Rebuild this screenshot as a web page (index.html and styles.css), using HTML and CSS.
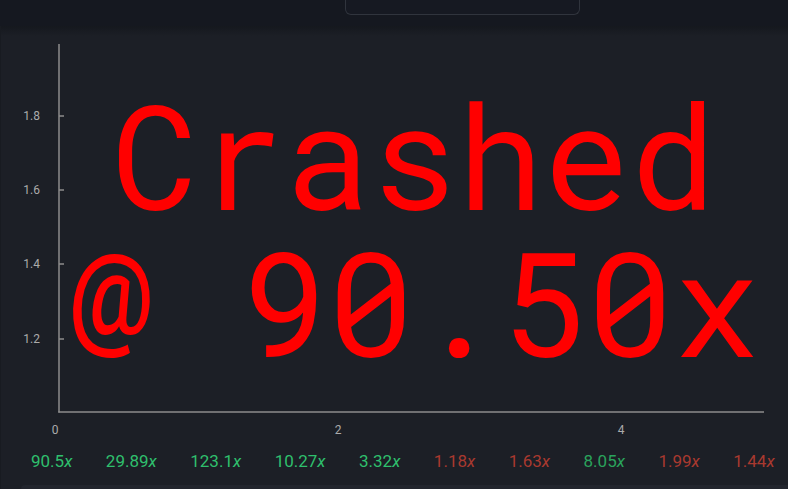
FILE: index.html
```html
<!DOCTYPE html>
<html>
<head>
<meta charset="utf-8">
<link rel="stylesheet" href="styles.css">
</head>
<body>
<div class="topbar">
  <div class="tab"></div>
</div>
<div class="panel">
  <div class="chart">
    <svg class="plot" width="788" height="410" viewBox="0 0 788 410">
      <g class="axis">
        <line x1="58" y1="14" x2="58" y2="382.5"/>
        <line x1="57.25" y1="382" x2="763" y2="382"/>
        <line x1="58" y1="86" x2="63" y2="86"/>
        <line x1="58" y1="160" x2="63" y2="160"/>
        <line x1="58" y1="234" x2="63" y2="234"/>
        <line x1="58" y1="309" x2="63" y2="309"/>
      </g>
      <g class="ylab">
        <text x="39" y="90">1.8</text>
        <text x="39" y="164">1.6</text>
        <text x="39" y="238">1.4</text>
        <text x="39" y="313">1.2</text>
      </g>
      <g class="xlab">
        <text x="54" y="404">0</text>
        <text x="337" y="404">2</text>
        <text x="620" y="404">4</text>
      </g>
    </svg>
    <div class="crash">Crashed @ 90.50x</div>
  </div>
  <div class="history">
    <span class="win">90.5<i>x</i></span>
    <span class="win">29.89<i>x</i></span>
    <span class="win">123.1<i>x</i></span>
    <span class="win">10.27<i>x</i></span>
    <span class="win">3.32<i>x</i></span>
    <span class="lose">1.18<i>x</i></span>
    <span class="lose">1.63<i>x</i></span>
    <span class="win dim">8.05<i>x</i></span>
    <span class="lose">1.99<i>x</i></span>
    <span class="lose">1.44<i>x</i></span>
  </div>
  <div class="card"></div>
</div>
</body>
</html>
```

FILE: styles.css
```css
html, body {
  margin: 0;
  padding: 0;
  background: #151820;
  overflow: hidden;
  width: 788px;
  height: 489px;
}

.topbar {
  height: 26px;
  background: #151820;
}

.tab {
  margin-left: 345px;
  width: 233px;
  height: 14px;
  position: relative;
  border: 1px solid #30343d;
  border-top: none;
  border-radius: 0 0 6px 6px;
  background: #161922;
}

.panel {
  background: linear-gradient(#15181e 0px, #1c1f26 10px, #1c1f26 100%);
  border-left: 1px solid #181b21;
  padding-top: 4px;
  height: 459px;
  overflow: hidden;
}

.chart {
  position: relative;
  height: 410px;
}

.plot {
  display: block;
}

.axis line {
  stroke: #8c8c8c;
  stroke-width: 1.5;
}

.ylab text, .xlab text {
  font-family: Roboto, "Liberation Sans", sans-serif;
  font-size: 12px;
  fill: #ababab;
}

.ylab text {
  text-anchor: end;
}

.xlab text {
  text-anchor: middle;
}

.crash {
  position: absolute;
  left: 43px;
  width: 740px;
  top: 51px;
  text-align: center;
  font-family: "Roboto Mono", "DejaVu Sans Mono", monospace;
  font-size: 144px;
  line-height: 147px;
  color: #ff0000;
}

.history {
  display: flex;
  gap: 33.5px;
  padding-left: 30px;
  height: 42px;
  align-items: center;
  font-family: Roboto, "Liberation Sans", sans-serif;
  font-size: 17px;
}

.history i {
  font-style: italic;
}

.win {
  color: #2fbf6d;
}

.win.dim {
  color: #2aa35c;
}

.lose {
  color: #a9392f;
}

.card {
  margin-left: 20px;
  margin-top: 3px;
  height: 4px;
  background: #22252d;
  border-radius: 7px 0 0 0;
}
```
